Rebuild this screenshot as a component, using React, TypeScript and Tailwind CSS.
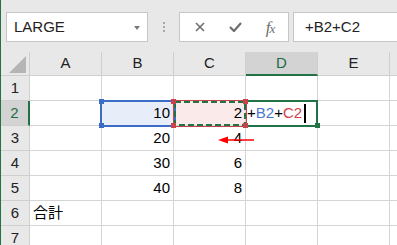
import React from 'react';

const COLS = ['A', 'B', 'C', 'D', 'E'];

// values by row number -> column letter
const CELLS: Record<number, Record<string, string>> = {
  2: { B: '10', C: '2' },
  3: { B: '20', C: '4' },
  4: { B: '30', C: '6' },
  5: { B: '40', C: '8' },
};

function Toolbar() {
  return (
    <div className="h-[52px] shrink-0 bg-[#e8e8e8] flex items-start pt-[12px] pl-[5px]">
      {/* Name box */}
      <div className="w-[142px] h-[30px] bg-white border border-[#c6c6c6] flex items-center pl-[7px] pr-[7px] pt-[1px]">
        <span className="flex-1 text-[15px] text-[#222]">LARGE</span>
        <svg width="6" height="4" viewBox="0 0 6 4">
          <path d="M0 0h6L3 4z" fill="#7a7a7a" />
        </svg>
      </div>
      {/* divider dots */}
      <div className="w-[31px] h-[30px] flex flex-col items-center justify-center gap-[2px]">
        <span className="w-[2px] h-[2px] bg-[#a8a8a8]" />
        <span className="w-[2px] h-[2px] bg-[#a8a8a8]" />
        <span className="w-[2px] h-[2px] bg-[#a8a8a8]" />
      </div>
      {/* cancel / enter / fx */}
      <div className="w-[110px] h-[30px] bg-white border border-[#c6c6c6] flex items-center">
        <div className="w-[38px] flex justify-center pl-[2px]">
          <svg width="10" height="10" viewBox="0 0 10 10">
            <path d="M1 1l8 8M9 1l-8 8" stroke="#6e6e6e" strokeWidth="1.6" />
          </svg>
        </div>
        <div className="w-[34px] flex justify-center">
          <svg width="13" height="10" viewBox="0 0 13 10">
            <path d="M1 5l4 4 7-8" stroke="#6e6e6e" strokeWidth="2.2" fill="none" />
          </svg>
        </div>
        <div className="w-[36px] flex justify-center">
          <span className="italic text-[17px] leading-none text-[#6e6e6e] font-['Liberation_Serif',serif] tracking-[-1px]">
            f<span className="text-[13px]">x</span>
          </span>
        </div>
      </div>
      {/* formula box */}
      <div className="ml-[4px] flex-1 h-[30px] bg-white border border-r-0 border-[#c6c6c6] flex items-center pl-[11px] pt-[1px]">
        <span className="text-[15px] text-[#222]">+B2+C2</span>
      </div>
    </div>
  );
}

function HeaderRow() {
  return (
    <div className="flex h-[24px] shrink-0">
      <div className="w-[29px] shrink-0 bg-[#e8e8e8] border-r border-b border-[#cfcfcf] flex items-end justify-end pr-[3px] pb-[2px]">
        <svg width="17" height="17" viewBox="0 0 17 17">
          <path d="M17 0V17H0z" fill="#b5b5b5" />
        </svg>
      </div>
      {COLS.map((c) => (
        <div
          key={c}
          className={`w-[72px] shrink-0 flex items-center justify-center text-[15px] border-r border-[#cfcfcf] ${
            c === 'D'
              ? 'bg-[#d3d3d3] border-b-2 border-b-[#217346] text-[#1e6b43]'
              : 'bg-[#e8e8e8] border-b text-[#222]'
          }`}
        >
          {c}
        </div>
      ))}
      <div className="flex-1 bg-[#e8e8e8] border-b border-[#cfcfcf]" />
    </div>
  );
}

function Row({ n }: { n: number }) {
  const vals = CELLS[n] ?? {};
  return (
    <div className="flex h-[25px] shrink-0">
      <div
        className={`w-[29px] shrink-0 flex items-center justify-center text-[15px] border-b border-[#cfcfcf] ${
          n === 2
            ? 'bg-[#d3d3d3] border-r-2 border-r-[#217346] text-[#1e6b43]'
            : 'bg-[#e8e8e8] border-r text-[#222]'
        }`}
      >
        {n}
      </div>
      {COLS.map((c) => {
        let bg = 'bg-white';
        if (n === 2 && c === 'B') bg = 'bg-[#e8eef9]';
        if (n === 2 && c === 'C') bg = 'bg-[#fbeaea]';
        return (
          <div
            key={c}
            className={`w-[72px] shrink-0 border-r border-b border-[#d4d4d4] flex items-center text-[15px] text-black ${bg} ${
              c === 'A' ? 'justify-start pl-[3px]' : 'justify-end pr-[3px]'
            }`}
          >
            {n === 6 && c === 'A' ? '合計' : vals[c] ?? ''}
            {n === 2 && c === 'D' && (
              <span className="w-full flex items-center pl-[1px]">
                +<span className="text-[#4a78cf]">B2</span>+<span className="text-[#d0404a]">C2</span>
                <span className="ml-[2px] w-[2px] h-[19px] bg-black" />
              </span>
            )}
          </div>
        );
      })}
      <div className="flex-1 border-b border-[#d4d4d4] bg-white" />
    </div>
  );
}

function Overlays() {
  return (
    <>
      {/* B2 reference (blue) */}
      <div className="absolute left-[100px] top-[100px] w-[76px] h-[27px] border-2 border-[#3b6dc7]" />
      {/* D2 edit cell (green) */}
      <div className="absolute left-[246px] top-[100px] w-[72px] h-[27px] border-2 border-l-0 border-[#217346]" />
      {/* C2 reference (red + dashed) */}
      <div className="absolute left-[173px] top-[100px] w-[74px] h-[27px] border border-[#c9434a]" />
      <svg className="absolute left-0 top-0" width="397" height="245">
        <rect x="175" y="102" width="70" height="23" fill="none" stroke="#217346" strokeWidth="2" strokeDasharray="6 3" />
        {/* handles */}
        <rect x="99" y="99" width="5" height="5" fill="#3b6dc7" />
        <rect x="99" y="123" width="5" height="5" fill="#3b6dc7" />
        <rect x="171" y="99" width="5" height="5" fill="#c9434a" />
        <rect x="171" y="123" width="5" height="5" fill="#c9434a" />
        <rect x="243" y="99" width="5" height="5" fill="#c9434a" />
        <rect x="243" y="123" width="5" height="5" fill="#c9434a" />
        <rect x="315" y="123" width="5" height="5" fill="#217346" />
        {/* red arrow over C3 */}
        <path d="M218 140l10-3.5v7z" fill="#ff0000" />
        <path d="M226 140H254" stroke="#ff0000" strokeWidth="1.5" />
      </svg>
    </>
  );
}

export default function App() {
  return (
    <div className="relative w-[397px] h-[245px] overflow-hidden flex bg-white font-['Liberation_Sans','Noto_Sans_CJK_JP',sans-serif]">
      <div className="w-[1px] shrink-0 bg-[#217346]" />
      <div className="flex-1 flex flex-col">
        <Toolbar />
        <HeaderRow />
        {[1, 2, 3, 4, 5, 6, 7].map((n) => (
          <Row key={n} n={n} />
        ))}
      </div>
      <Overlays />
    </div>
  );
}
